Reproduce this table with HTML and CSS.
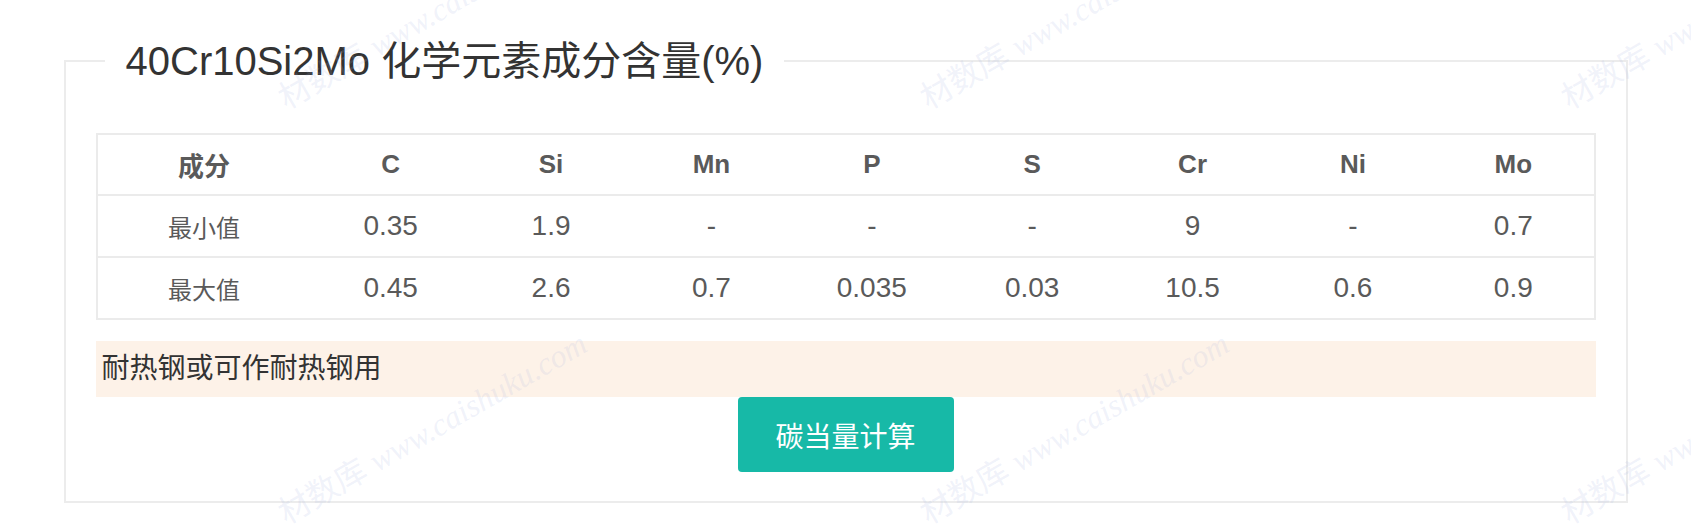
FILE: index.html
```html
<!DOCTYPE html>
<html lang="zh-CN">
<head>
    <meta charset="UTF-8">
    <meta name="viewport" content="width=device-width, initial-scale=1.0">
    <title>40Cr10Si2Mo 化学元素成分含量</title>
    <link rel="stylesheet" href="styles.css">
</head>
<body>
    <fieldset class="panel">
        <legend class="panel-title">40Cr10Si2Mo 化学元素成分含量(%)</legend>
        <table class="comp-table">
            <colgroup>
                <col class="col-name">
                <col span="8">
            </colgroup>
            <thead>
                <tr>
                    <th>成分</th>
                    <th>C</th>
                    <th>Si</th>
                    <th>Mn</th>
                    <th>P</th>
                    <th>S</th>
                    <th>Cr</th>
                    <th>Ni</th>
                    <th>Mo</th>
                </tr>
            </thead>
            <tbody>
                <tr>
                    <td class="name">最小值</td>
                    <td>0.35</td>
                    <td>1.9</td>
                    <td>-</td>
                    <td>-</td>
                    <td>-</td>
                    <td>9</td>
                    <td>-</td>
                    <td>0.7</td>
                </tr>
                <tr>
                    <td class="name">最大值</td>
                    <td>0.45</td>
                    <td>2.6</td>
                    <td>0.7</td>
                    <td>0.035</td>
                    <td>0.03</td>
                    <td>10.5</td>
                    <td>0.6</td>
                    <td>0.9</td>
                </tr>
            </tbody>
        </table>
        <div class="note">耐热钢或可作耐热钢用</div>
        <button class="calc-btn">碳当量计算</button>
    </fieldset>

    <!-- 水印 -->
    <div class="watermarks">
        <span class="wm"><span class="wm-cn">材数库</span> <i>www.caishuku.com</i></span>
        <span class="wm"><span class="wm-cn">材数库</span> <i>www.caishuku.com</i></span>
        <span class="wm"><span class="wm-cn">材数库</span> <i>www.caishuku.com</i></span>
        <span class="wm"><span class="wm-cn">材数库</span> <i>www.caishuku.com</i></span>
        <span class="wm"><span class="wm-cn">材数库</span> <i>www.caishuku.com</i></span>
        <span class="wm"><span class="wm-cn">材数库</span> <i>www.caishuku.com</i></span>
        <span class="wm"><span class="wm-cn">材数库</span> <i>www.caishuku.com</i></span>
        <span class="wm"><span class="wm-cn">材数库</span> <i>www.caishuku.com</i></span>
    </div>
</body>
</html>
```

FILE: styles.css
```css
body {
    margin: 0;
    padding: 0;
    background: #fff;
    font-family: "Liberation Sans", Arial, "Noto Sans CJK SC", sans-serif;
    color: #333;
}
.panel {
    width: 1564px;
    box-sizing: border-box;
    margin: 38px auto 0;
    padding: 49px 30px 29px;
    border: 2px solid #ececec;
}
.panel-title {
    margin-left: 9px;
    padding: 0 21px;
    font-size: 40px;
    line-height: 46px;
    font-weight: normal;
    color: #333;
}
.comp-table {
    width: 100%;
    table-layout: fixed;
    border-collapse: separate;
    border-spacing: 0;
    border: 2px solid #ebebeb;
    color: #5a5a5a;
}
.col-name {
    width: 213px;
}
.comp-table th,
.comp-table td {
    padding: 0;
    text-align: center;
    vertical-align: middle;
}
.comp-table th {
    height: 59px;
    font-size: 26px;
    font-weight: bold;
}
.comp-table td {
    height: 60px;
    border-top: 2px solid #ebebeb;
    font-size: 28px;
}
.comp-table td.name {
    font-size: 24px;
}
.note {
    margin-top: 21px;
    height: 56px;
    line-height: 56px;
    padding-left: 6px;
    background: #fdf2e8;
    font-size: 28px;
    color: #333;
}
.calc-btn {
    display: block;
    width: 216px;
    height: 75px;
    margin: 0 auto;
    border: none;
    border-radius: 4px;
    background: #17b9a7;
    color: #fff;
    font-family: inherit;
    font-size: 28px;
    cursor: pointer;
}
.watermarks {
    position: absolute;
    top: 0;
    left: 0;
    width: 100%;
    height: 531px;
    overflow: hidden;
    pointer-events: none;
}
.wm {
    position: absolute;
    white-space: nowrap;
    font-size: 32px;
    line-height: 36px;
    color: rgba(170, 182, 225, 0.18);
    transform: rotate(-30deg);
    transform-origin: 0 100%;
}
.wm i {
    font-family: "Liberation Serif", serif;
}
.wm:nth-child(1) { left: -356px; top: 80px; }
.wm:nth-child(2) { left: 290px; top: 80px; }
.wm:nth-child(3) { left: 932px; top: 80px; }
.wm:nth-child(4) { left: 1573px; top: 80px; }
.wm:nth-child(5) { left: -356px; top: 495px; }
.wm:nth-child(6) { left: 290px; top: 495px; }
.wm:nth-child(7) { left: 932px; top: 495px; }
.wm:nth-child(8) { left: 1573px; top: 495px; }
```
